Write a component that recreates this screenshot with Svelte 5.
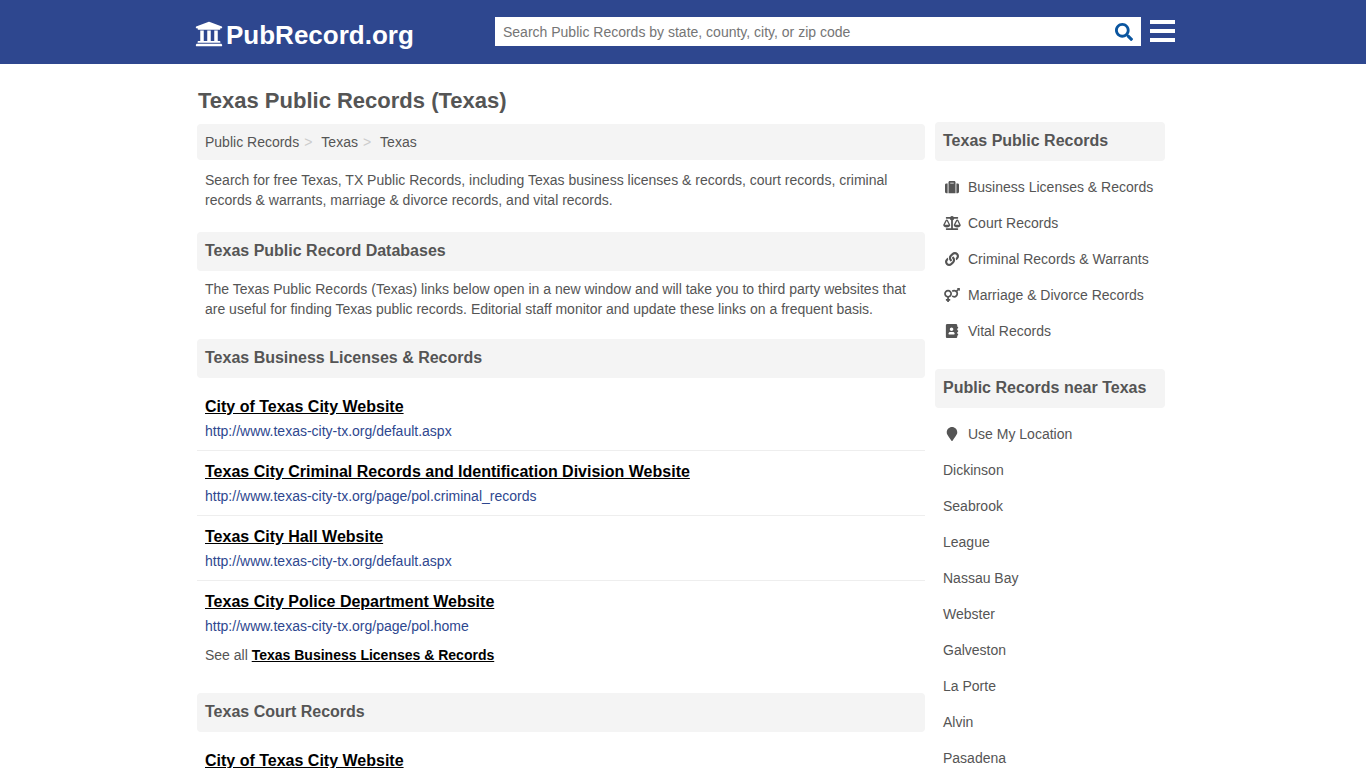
<script lang="ts">
	type Icon = { box: string; d: string };

	const icons: Record<string, Icon> = {
		university: {
			box: '0 0 512 512',
			d: 'M496 128v16a8 8 0 0 1-8 8h-24v12c0 6.627-5.373 12-12 12H60c-6.627 0-12-5.373-12-12v-12H24a8 8 0 0 1-8-8v-16a8 8 0 0 1 4.941-7.392l232-88a7.996 7.996 0 0 1 6.118 0l232 88A8 8 0 0 1 496 128zm-24 304H40c-13.255 0-24 10.745-24 24v16a8 8 0 0 0 8 8h464a8 8 0 0 0 8-8v-16c0-13.255-10.745-24-24-24zM96 192v192H60c-6.627 0-12 5.373-12 12v20h416v-20c0-6.627-5.373-12-12-12h-36V192h-64v192h-64V192h-64v192h-64V192H96z',
		},
		search: {
			box: '0 0 512 512',
			d: 'M505 442.7L405.3 343c-4.5-4.5-10.6-7-17-7H372c27.6-35.3 44-79.7 44-128C416 93.1 322.9 0 208 0S0 93.1 0 208s93.1 208 208 208c48.3 0 92.7-16.4 128-44v16.3c0 6.4 2.5 12.5 7 17l99.7 99.7c9.4 9.4 24.6 9.4 33.9 0l28.3-28.3c9.4-9.4 9.4-24.6.1-34zM208 336c-70.7 0-128-57.2-128-128 0-70.7 57.2-128 128-128 70.7 0 128 57.2 128 128 0 70.7-57.2 128-128 128z',
		},
		suitcase: {
			box: '0 0 512 512',
			d: 'M128 480h256V80c0-26.5-21.5-48-48-48H176c-26.5 0-48 21.5-48 48v400zm64-384h128v32H192V96zm320 80v256c0 26.5-21.5 48-48 48h-48V128h48c26.5 0 48 21.5 48 48zM96 480H48c-26.5 0-48-21.5-48-48V176c0-26.5 21.5-48 48-48h48v352z',
		},
		scale: {
			box: '0 0 640 512',
			d: 'M256 336h-.02c0-16.18 1.34-8.73-85.05-181.51-17.65-35.29-68.19-35.36-85.87 0C-2.06 328.75.02 320.33.02 336H0c0 44.18 57.31 80 128 80s128-35.82 128-80zM128 176l72 144H56l72-144zm511.98 160c0-16.18 1.34-8.73-85.05-181.51-17.65-35.29-68.19-35.36-85.87 0-87.12 174.26-85.04 165.84-85.04 181.51H384c0 44.18 57.31 80 128 80s128-35.82 128-80h-.02zM440 320l72-144 72 144H440zm88 128H352V153.25c23.51-10.29 41.16-31.48 46.39-57.25H528c8.84 0 16-7.16 16-16V48c0-8.84-7.16-16-16-16H383.64C369.04 12.68 346.09 0 320 0s-49.04 12.68-63.64 32H112c-8.84 0-16 7.16-16 16v32c0 8.84 7.16 16 16 16h129.61c5.23 25.76 22.87 46.96 46.39 57.25V448H112c-8.84 0-16 7.16-16 16v32c0 8.84 7.16 16 16 16h416c8.84 0 16-7.16 16-16v-32c0-8.84-7.16-16-16-16z',
		},
		link: {
			box: '0 0 512 512',
			d: 'M326.612 185.391c59.747 59.809 58.927 155.698.36 214.59-.11.12-.24.25-.36.37l-67.2 67.2c-59.27 59.27-155.699 59.262-214.96 0-59.27-59.26-59.27-155.7 0-214.96l37.106-37.106c9.84-9.84 26.786-3.3 27.294 10.606.648 17.722 3.826 35.527 9.69 52.721 1.986 5.822.567 12.262-3.783 16.612l-13.087 13.087c-28.026 28.026-28.905 73.66-1.155 101.96 28.024 28.579 74.086 28.749 102.325.51l67.2-67.19c28.191-28.191 28.073-73.757 0-101.83-3.701-3.694-7.429-6.564-10.341-8.569a16.037 16.037 0 0 1-6.947-12.606c-.396-10.567 3.348-21.456 11.698-29.806l21.054-21.055c5.521-5.521 14.182-6.199 20.584-1.731a152.482 152.482 0 0 1 20.522 17.197zM467.547 44.449c-59.261-59.262-155.69-59.27-214.96 0l-67.2 67.2c-.12.12-.25.25-.36.37-58.566 58.892-59.387 154.781.36 214.59a152.454 152.454 0 0 0 20.521 17.196c6.402 4.468 15.064 3.789 20.584-1.731l21.054-21.055c8.35-8.35 12.094-19.239 11.698-29.806a16.037 16.037 0 0 0-6.947-12.606c-2.912-2.005-6.64-4.875-10.341-8.569-28.073-28.073-28.191-73.639 0-101.83l67.2-67.19c28.239-28.239 74.3-28.069 102.325.51 27.75 28.3 26.872 73.934-1.155 101.96l-13.087 13.087c-4.35 4.35-5.769 10.79-3.783 16.612 5.864 17.194 9.042 34.999 9.69 52.721.509 13.906 17.454 20.446 27.294 10.606l37.106-37.106c59.271-59.259 59.271-155.699.001-214.959z',
		},
		couple: {
			box: '0 0 576 512',
			d: 'M564 0h-79c-10.7 0-16 12.9-8.5 20.4l16.9 16.9-48.7 48.7C422.5 72.1 396.2 64 368 64c-33.7 0-64.6 11.6-89.2 30.9 14 16.7 25 36 32.1 57.1 14.5-14.8 34.7-24 57.1-24 44.1 0 80 35.9 80 80s-35.9 80-80 80c-22.3 0-42.6-9.2-57.1-24-7.1 21.1-18 40.4-32.1 57.1 24.5 19.4 55.5 30.9 89.2 30.9 79.5 0 144-64.5 144-144 0-28.2-8.1-54.5-22.1-76.7l48.7-48.7 16.9 16.9c2.4 2.4 5.4 3.5 8.4 3.5 6.2 0 12.1-4.8 12.1-12V12c0-6.6-5.4-12-12-12zM144 64C64.5 64 0 128.5 0 208c0 68.5 47.9 125.9 112 140.4V400H76c-6.6 0-12 5.4-12 12v40c0 6.6 5.4 12 12 12h36v36c0 6.6 5.4 12 12 12h40c6.6 0 12-5.4 12-12v-36h36c6.6 0 12-5.4 12-12v-40c0-6.6-5.4-12-12-12h-36v-51.6c64.1-14.6 112-71.9 112-140.4 0-79.5-64.5-144-144-144zm0 224c-44.1 0-80-35.9-80-80s35.9-80 80-80 80 35.9 80 80-35.9 80-80 80z',
		},
		book: {
			box: '0 0 448 512',
			d: 'M436 160c6.6 0 12-5.4 12-12v-40c0-6.6-5.4-12-12-12h-20V48c0-26.5-21.5-48-48-48H48C21.5 0 0 21.5 0 48v416c0 26.5 21.5 48 48 48h320c26.5 0 48-21.5 48-48v-48h20c6.6 0 12-5.4 12-12v-40c0-6.6-5.4-12-12-12h-20v-64h20c6.6 0 12-5.4 12-12v-40c0-6.6-5.4-12-12-12h-20v-64h20zm-228-32c35.3 0 64 28.7 64 64s-28.7 64-64 64-64-28.7-64-64 28.7-64 64-64zm112 236.8c0 10.6-10 19.2-22.4 19.2H118.4C106 384 96 375.4 96 364.8v-19.2c0-31.8 30.1-57.6 67.2-57.6h5c12.3 5.1 25.7 8 39.8 8s27.6-2.9 39.8-8h5c37.1 0 67.2 25.8 67.2 57.6v19.2z',
		},
		marker: {
			box: '0 0 384 512',
			d: 'M172.268 501.67C26.97 291.031 0 269.413 0 192 0 85.961 85.961 0 192 0s192 85.961 192 192c0 77.413-26.97 99.031-172.268 309.67-9.535 13.774-29.93 13.773-39.464 0z',
		},
	};

	const crumbs = ['Public Records', 'Texas', 'Texas'];

	const site = 'http://www.texas-city-tx.org';
	const business = [
		{ title: 'City of Texas City Website', url: `${site}/default.aspx` },
		{ title: 'Texas City Criminal Records and Identification Division Website', url: `${site}/page/pol.criminal_records` },
		{ title: 'Texas City Hall Website', url: `${site}/default.aspx` },
		{ title: 'Texas City Police Department Website', url: `${site}/page/pol.home` },
	];
	const court = [{ title: 'City of Texas City Website', url: `${site}/default.aspx` }];

	const categories = [
		{ icon: 'suitcase', label: 'Business Licenses & Records' },
		{ icon: 'scale', label: 'Court Records' },
		{ icon: 'link', label: 'Criminal Records & Warrants' },
		{ icon: 'couple', label: 'Marriage & Divorce Records' },
		{ icon: 'book', label: 'Vital Records' },
	];
	const places = ['Dickinson', 'Seabrook', 'League', 'Nassau Bay', 'Webster', 'Galveston', 'La Porte', 'Alvin', 'Pasadena'];

	let query = $state('');
</script>

{#snippet icon(name: string)}
	<svg class="icon" viewBox={icons[name].box} aria-hidden="true"><path d={icons[name].d} /></svg>
{/snippet}

{#snippet records(list: { title: string; url: string }[])}
	<ul class="records">
		{#each list as item}
			<li>
				<a class="title" href={item.url}>{item.title}</a>
				<a class="url" href={item.url}>{item.url}</a>
			</li>
		{/each}
	</ul>
{/snippet}

<header>
	<div class="bar">
		<a class="logo" href="#home">{@render icon('university')}<span>PubRecord.org</span></a>
		<form class="search" onsubmit={(e) => e.preventDefault()}>
			<input
				type="text"
				aria-label="Search Public Records"
				placeholder="Search Public Records by state, county, city, or zip code"
				bind:value={query}
			/>
			<button type="submit" aria-label="Search">{@render icon('search')}</button>
		</form>
		<button class="menu" type="button" aria-label="Menu"><i></i><i></i><i></i></button>
	</div>
</header>

<div class="page">
	<h1>Texas Public Records (Texas)</h1>
	<div class="columns">
		<main>
			<nav class="crumbs" aria-label="Breadcrumb">
				{#each crumbs as crumb, i}
					<a href="#home">{crumb}</a>
					{#if i < crumbs.length - 1}<span class="sep">&gt;</span>{/if}
				{/each}
			</nav>
			<p class="intro">
				Search for free Texas, TX Public Records, including Texas business licenses &amp; records, court
				records, criminal records &amp; warrants, marriage &amp; divorce records, and vital records.
			</p>

			<h2>Texas Public Record Databases</h2>
			<p>
				The Texas Public Records (Texas) links below open in a new window and will take you to third party
				websites that are useful for finding Texas public records. Editorial staff monitor and update these
				links on a frequent basis.
			</p>

			<h2>Texas Business Licenses &amp; Records</h2>
			{@render records(business)}
			<p class="see-all">See all <a href="#business">Texas Business Licenses &amp; Records</a></p>

			<h2>Texas Court Records</h2>
			{@render records(court)}
		</main>

		<aside>
			<h2>Texas Public Records</h2>
			<ul class="links">
				{#each categories as c}
					<li><a href="#records">{@render icon(c.icon)}{c.label}</a></li>
				{/each}
			</ul>

			<h2>Public Records near Texas</h2>
			<ul class="links">
				<li><a href="#location">{@render icon('marker')}Use My Location</a></li>
				{#each places as place}
					<li><a href="#place">{place}</a></li>
				{/each}
			</ul>
		</aside>
	</div>
</div>

<style>
	:global(body) {
		margin: 0;
		background: #fff;
		color: #555;
		font: 14px/20px Arial, 'Liberation Sans', sans-serif;
	}

	a {
		color: inherit;
		text-decoration: none;
	}

	ul {
		list-style: none;
		margin: 0;
		padding: 0;
	}

	.icon {
		fill: currentColor;
		flex-shrink: 0;
	}

	header {
		padding-bottom: 1px;
		background: #2e478f;
	}

	.bar {
		display: flex;
		align-items: center;
		box-sizing: border-box;
		max-width: 984px;
		height: 63px;
		margin: 0 auto;
		padding-left: 4px;
	}

	.logo {
		display: flex;
		align-items: center;
		gap: 3px;
		width: 300px;
		color: #fff;
		font-size: 26px;
		font-weight: bold;
		line-height: 32px;
	}

	.logo span {
		padding-top: 7px;
	}

	.logo .icon {
		width: 28px;
		height: 28px;
		padding-top: 4px;
	}

	.search {
		display: flex;
		flex: 1;
		height: 29px;
		background: #fff;
	}

	.search input {
		flex: 1;
		min-width: 0;
		border: 0;
		padding: 0 8px;
		background: none;
		color: #555;
		font: inherit;
		outline: none;
	}

	.search input::placeholder {
		color: #757575;
	}

	.search button {
		display: flex;
		align-items: center;
		justify-content: center;
		width: 34px;
		border: 0;
		padding: 0;
		background: none;
		color: #0a559f;
	}

	.search .icon {
		width: 18px;
		height: 18px;
	}

	.menu {
		display: flex;
		flex-direction: column;
		gap: 5px;
		width: 25px;
		margin: 0 0 1px 9px;
		border: 0;
		padding: 0;
		background: none;
	}

	.menu i {
		height: 4px;
		background: #fff;
	}

	.page {
		max-width: 968px;
		margin: 0 auto;
		padding: 0 4px 0 0;
	}

	h1 {
		margin: 0;
		padding: 21px 0 5px 1px;
		font-size: 22px;
		line-height: 32px;
	}

	.columns {
		display: flex;
		align-items: flex-start;
		gap: 10px;
	}

	main {
		flex: 1;
		min-width: 0;
		padding-top: 2px;
	}

	aside {
		width: 230px;
	}

	.crumbs {
		display: flex;
		padding: 8px;
		border-radius: 4px;
		background: #f4f4f4;
	}

	.sep {
		padding: 0 9px 0 5px;
		color: #ccc;
	}

	p {
		margin: 8px 8px 20px;
	}

	.intro {
		margin: 10px 8px 22px;
	}

	h2 {
		margin: 0 0 8px;
		padding: 7px 8px 8px;
		border-radius: 4px;
		background: #f4f4f4;
		font-size: 16px;
		line-height: 24px;
	}

	.records li {
		display: flex;
		flex-direction: column;
		align-items: flex-start;
		gap: 2px;
		padding: 9px 8px;
		border-bottom: 1px solid #eee;
	}

	.records li:last-child {
		border-bottom: 0;
	}

	.title {
		color: #000;
		font-size: 16px;
		font-weight: bold;
		line-height: 24px;
		text-decoration: underline;
	}

	.url {
		color: #2e478f;
	}

	.see-all {
		margin: 0 8px 28px;
	}

	.see-all a {
		color: #000;
		font-weight: bold;
		text-decoration: underline;
	}

	.links {
		margin-bottom: 20px;
	}

	.links a {
		display: flex;
		align-items: center;
		gap: 7px;
		padding: 8px;
	}

	.links .icon {
		width: 18px;
		height: 14px;
	}
</style>
